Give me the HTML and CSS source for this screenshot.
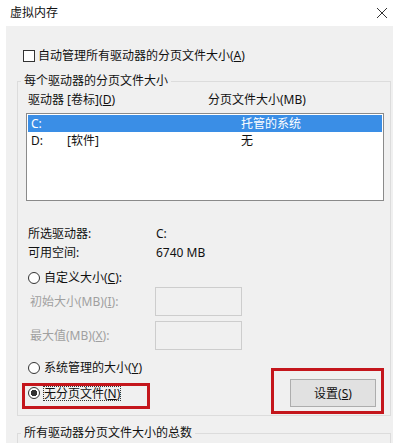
FILE: index.html
```html
<!DOCTYPE html>
<html>
<head>
	<meta charset="utf-8">
	<title>虚拟内存</title>
	<link rel="stylesheet" href="styles.css">
</head>

<body>
	<div class="titlebar">
		<span class="title">虚拟内存</span>
		<svg class="close" width="12" height="12" viewBox="0 0 12 12">
			<path d="M1 1 L11 11 M11 1 L1 11" stroke="#333" stroke-width="1" fill="none"/>
		</svg>
	</div>

	<div class="panel">
		<div class="checkrow">
			<span class="checkbox"></span>
			<span>自动管理所有驱动器的分页文件大小(<u>A</u>)</span>
		</div>

		<fieldset class="group">
			<legend>每个驱动器的分页文件大小</legend>
			<div class="gbody">
				<div class="listhead">
					<span class="col1">驱动器 [卷标](<u>D</u>)</span>
					<span>分页文件大小(MB)</span>
				</div>

				<div class="listbox">
					<div class="listrow selected">
						<span class="drive">C:</span>
						<span class="label"></span>
						<span>托管的系统</span>
					</div>
					<div class="listrow">
						<span class="drive">D:</span>
						<span class="label">[软件]</span>
						<span>无</span>
					</div>
				</div>

				<div class="info">
					<div class="inforow"><span class="key">所选驱动器:</span><span>C:</span></div>
					<div class="inforow"><span class="key">可用空间:</span><span>6740 MB</span></div>
				</div>

				<div class="radiorow custom">
					<span class="radio"></span>
					<span>自定义大小(<u>C</u>):</span>
				</div>

				<div class="sizerow">
					<span class="sizelabel">初始大小(MB)(<u>I</u>):</span>
					<span class="sizebox"></span>
				</div>
				<div class="sizerow">
					<span class="sizelabel">最大值(MB)(<u>X</u>):</span>
					<span class="sizebox"></span>
				</div>

				<div class="bottom">
					<div class="choices">
						<div class="radiorow">
							<span class="radio"></span>
							<span>系统管理的大小(<u>Y</u>)</span>
						</div>
						<div class="mark nofile">
							<div class="radiorow">
								<span class="radio checked"></span>
								<span class="focus">无分页文件(<u>N</u>)</span>
							</div>
						</div>
					</div>
					<div class="mark setbox">
						<button class="btn">设置(<u>S</u>)</button>
					</div>
				</div>
			</div>
		</fieldset>

		<fieldset class="group total">
			<legend>所有驱动器分页文件大小的总数</legend>
		</fieldset>
	</div>
</body>
</html>
```

FILE: styles.css
```css
*{
	box-sizing:border-box;
}

html,body{
	margin:0;
	padding:0;
}

body{
	width:398px;
	height:443px;
	overflow:hidden;
	background-color:#fff;
	color:#111;
	font-family:"Noto Sans","Noto Sans CJK SC",sans-serif;
	font-size:12px;
	line-height:16px;
}

u{
	text-decoration:underline;
	text-underline-offset:1px;
}

.titlebar{
	height:26px;
	display:flex;
	align-items:center;
	justify-content:space-between;
	padding-left:10px;
	padding-right:10px;
}

.title{
	font-size:12px;
}

.panel{
	margin-left:6px;
	width:387px;
	height:417px;
	background-color:#f0f0f0;
	padding-top:22px;
}

.checkrow{
	display:flex;
	align-items:center;
	height:16px;
	padding-left:17px;
}

.checkbox{
	width:12px;
	height:12px;
	border:1px solid #333;
	background-color:#fff;
	margin-right:3px;
}

.group{
	margin:9px 2px 0 11px;
	padding:0 6px 1px 3px;
	border:1px solid #dcdcdc;
	min-width:0;
}

.group legend{
	padding:0 3px;
	line-height:16px;
}

.gbody{
	padding-left:7px;
}

.listhead{
	display:flex;
	margin-top:3px;
	height:16px;
}

.col1{
	width:180px;
}

.listbox{
	margin-top:5px;
	margin-left:-2px;
	height:88px;
	border:1px solid #8a8a8a;
	background-color:#fff;
	padding:1px;
}

.listrow{
	display:flex;
	height:17px;
	line-height:17px;
	padding-left:3px;
}

.listrow.selected{
	background-color:#3a8ee6;
	color:#fff;
}

.drive{
	width:36px;
}

.listrow .label{
	width:174px;
}

.info{
	margin-top:23px;
}

.inforow{
	display:flex;
	height:19px;
	line-height:19px;
}

.key{
	width:128px;
}

.radiorow{
	display:flex;
	align-items:center;
	height:16px;
}

.radiorow.custom{
	margin-top:8px;
}

.radio{
	width:12px;
	height:12px;
	border:1px solid #333;
	border-radius:50%;
	background-color:#fff;
	margin-right:4px;
}

.radio.checked{
	background:radial-gradient(circle, #333 0 3px, #fff 3.5px);
}

.sizerow{
	display:flex;
	align-items:center;
	height:29px;
	margin-top:1px;
	color:#a0a0a0;
}

.sizerow + .sizerow{
	margin-top:5px;
}

.sizelabel{
	width:127px;
	padding-left:2px;
}

.sizebox{
	width:87px;
	height:29px;
	border:1px solid #cdcdcd;
}

.bottom{
	display:flex;
	justify-content:space-between;
	align-items:flex-start;
	margin-top:10px;
}

.mark{
	border:3px solid #c4161c;
}

.nofile{
	margin-top:7px;
	margin-left:-6px;
	width:128px;
	padding:0 0 6px 3px;
}

.nofile .radiorow{
	height:14px;
}

.focus{
	outline:1px dotted #333;
	line-height:13px;
}

.setbox{
	margin-top:8px;
	padding:8px 5px 4px 16px;
}

.btn{
	display:block;
	width:86px;
	height:28px;
	background-color:#e1e1e1;
	border:1px solid #adadad;
	font-family:inherit;
	font-size:12px;
	color:#111;
	padding:0;
}

.group.total{
	margin-top:9px;
	height:40px;
	border-bottom:none;
}
```
